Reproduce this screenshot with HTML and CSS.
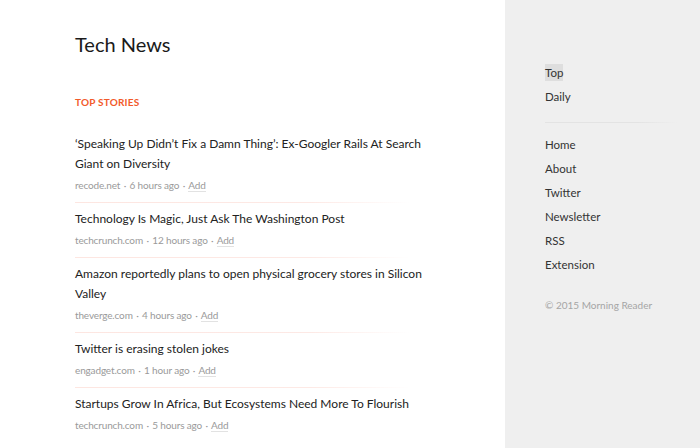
FILE: index.html
```html
<!DOCTYPE html>
<html>
<head>
<meta charset="utf-8">
<link rel="stylesheet" href="styles.css">
</head>
<body>
<div class="page">
  <main class="main">
    <h1 class="site-title">Tech News</h1>
    <h2 class="section-label">TOP STORIES</h2>
    <ul class="stories">
      <li class="story">
        <a class="story-title">‘Speaking Up Didn’t Fix a Damn Thing’: Ex-Googler Rails At Search Giant on Diversity</a>
        <div class="meta">recode.net <span class="dot">·</span> 6 hours ago <span class="dot">·</span> <a class="add">Add</a></div>
      </li>
      <li class="story">
        <a class="story-title">Technology Is Magic, Just Ask The Washington Post</a>
        <div class="meta">techcrunch.com <span class="dot">·</span> 12 hours ago <span class="dot">·</span> <a class="add">Add</a></div>
      </li>
      <li class="story">
        <a class="story-title">Amazon reportedly plans to open physical grocery stores in Silicon Valley</a>
        <div class="meta">theverge.com <span class="dot">·</span> 4 hours ago <span class="dot">·</span> <a class="add">Add</a></div>
      </li>
      <li class="story">
        <a class="story-title">Twitter is erasing stolen jokes</a>
        <div class="meta">engadget.com <span class="dot">·</span> 1 hour ago <span class="dot">·</span> <a class="add">Add</a></div>
      </li>
      <li class="story">
        <a class="story-title">Startups Grow In Africa, But Ecosystems Need More To Flourish</a>
        <div class="meta">techcrunch.com <span class="dot">·</span> 5 hours ago <span class="dot">·</span> <a class="add">Add</a></div>
      </li>
    </ul>
  </main>
  <aside class="sidebar">
    <nav class="nav-group">
      <a class="nav-link active">Top</a>
      <a class="nav-link">Daily</a>
    </nav>
    <div class="nav-sep"></div>
    <nav class="nav-group">
      <a class="nav-link">Home</a>
      <a class="nav-link">About</a>
      <a class="nav-link">Twitter</a>
      <a class="nav-link">Newsletter</a>
      <a class="nav-link">RSS</a>
      <a class="nav-link">Extension</a>
    </nav>
    <div class="copyright">© 2015 Morning Reader</div>
  </aside>
</div>
</body>
</html>
```

FILE: styles.css
```css
* { box-sizing: border-box; }
html, body { margin: 0; padding: 0; height: 100%; }
body {
  font-family: "Lato", "Noto Sans", sans-serif;
  color: #222;
  background: #fff;
  overflow: hidden;
}
.page {
  display: flex;
  height: 448px;
}
.main {
  width: 505px;
  padding: 31px 0 0 75px;
}
.site-title {
  margin: 0;
  font-size: 20px;
  font-weight: 400;
  line-height: 26px;
  color: #1a1a1a;
}
.section-label {
  margin: 38px 0 0;
  font-size: 10px;
  font-weight: 700;
  line-height: 14px;
  color: #f25a2a;
  letter-spacing: 0.2px;
}
.stories {
  list-style: none;
  margin: 18px 0 0;
  padding: 0;
  width: 358px;
}
.story {
  padding: 7px 0 9px;
  position: relative;
}
.story + .story::before {
  content: "";
  position: absolute;
  top: 0;
  left: 0;
  width: 335px;
  height: 1px;
  background: linear-gradient(to right, #fde6e1 0%, #fde9e5 70%, rgba(253,233,229,0) 100%);
}
.story-title {
  display: block;
  font-size: 12px;
  line-height: 20px;
  color: #222;
}
.meta {
  margin-top: 3px;
  font-size: 10px;
  line-height: 16px;
  color: #9a9a9a;
  letter-spacing: -0.15px;
}
.dot { margin: 0 1px; }
.add {
  color: #9a9a9a;
  border-bottom: 1px solid #e2e2e2;
}
.sidebar {
  flex: 1;
  background: #efefef;
  padding: 62px 0 0 40px;
}
.nav-group {
  display: flex;
  flex-direction: column;
  align-items: flex-start;
}
.nav-link {
  font-size: 11.5px;
  line-height: 24px;
  color: #333;
}
.nav-link.active {
  background: #dedede;
  line-height: 17px;
  margin: 2px 0 4px;
}
.nav-sep {
  width: 132px;
  height: 1px;
  margin: 13px 0 10px;
  background: linear-gradient(to right, #e3e3e3 0%, #e3e3e3 70%, rgba(227,227,227,0) 100%);
}
.copyright {
  margin-top: 21px;
  font-size: 10px;
  line-height: 14px;
  color: #a5a5a5;
}
```
